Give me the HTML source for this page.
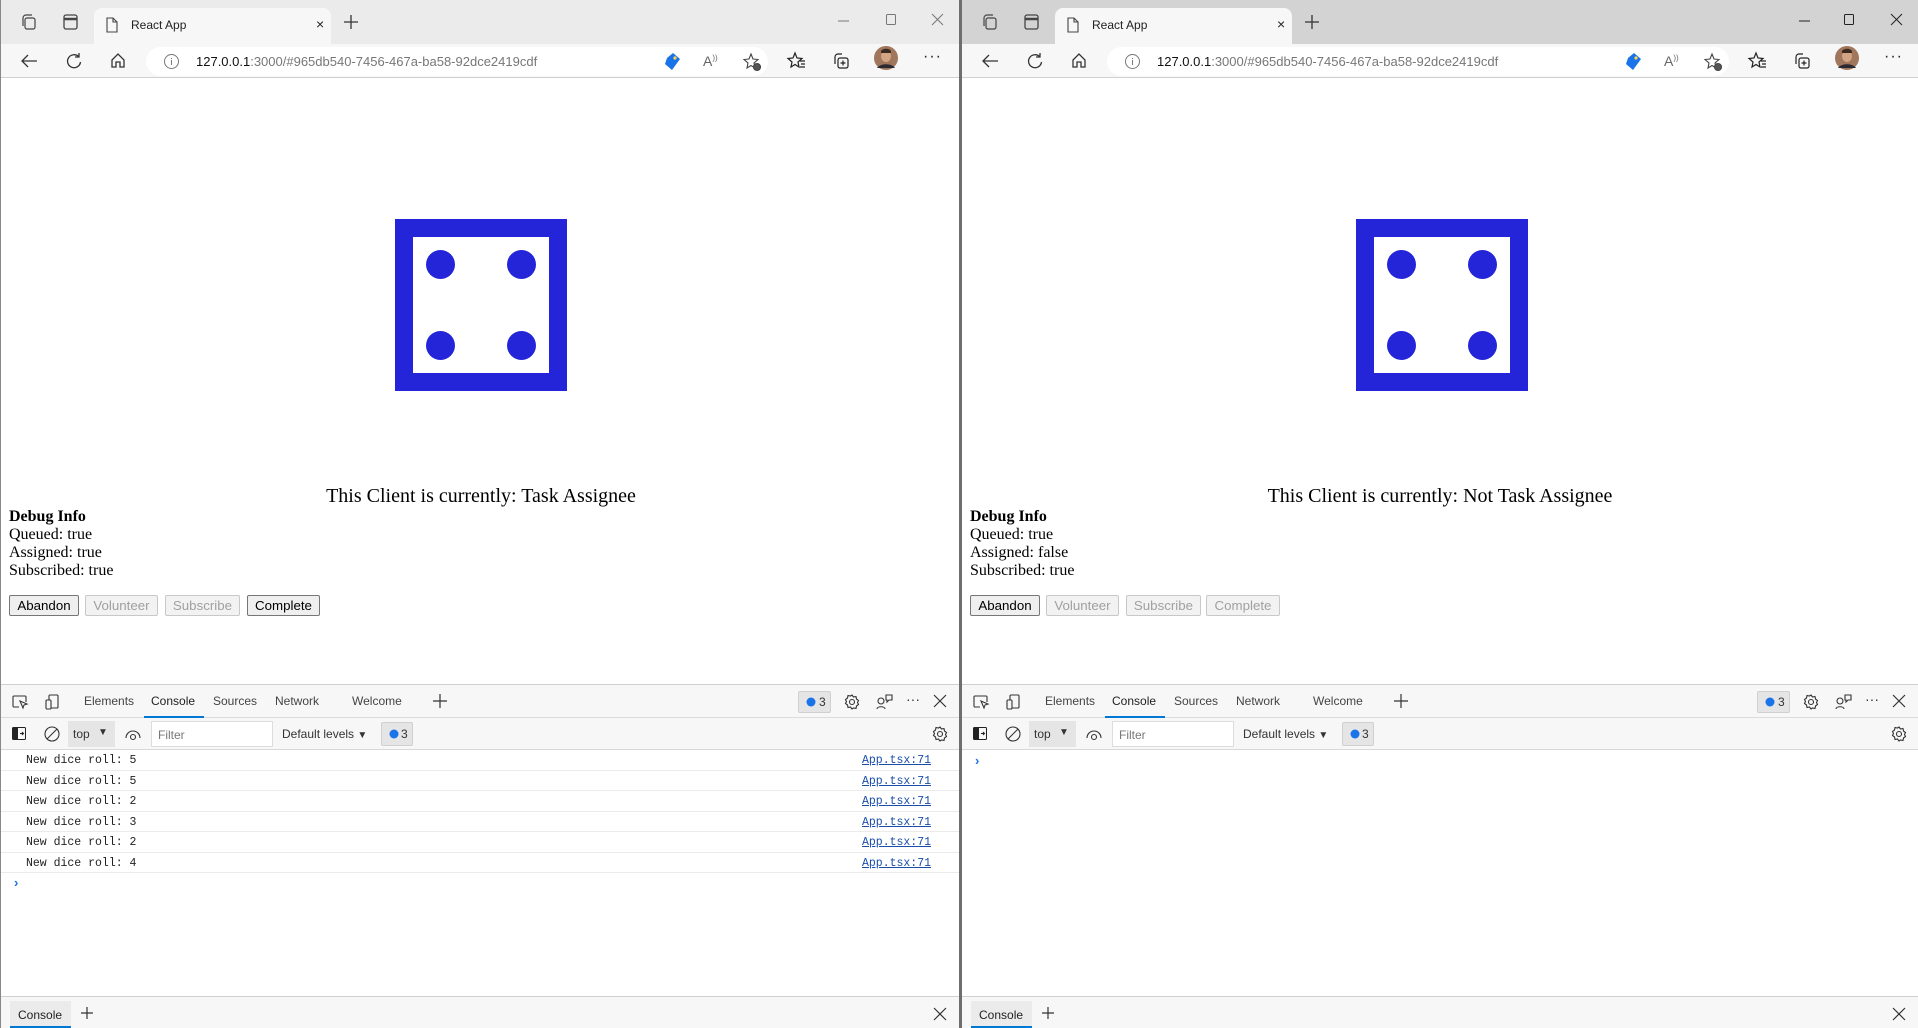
<!DOCTYPE html>
<html><head><meta charset="utf-8"><style>
*{box-sizing:border-box;margin:0;padding:0}
body{width:1918px;height:1028px;position:relative;overflow:hidden;background:#fff;font-family:"Liberation Sans",sans-serif}
.win{position:absolute;top:0;height:1028px;overflow:hidden;background:#fff}
.tabbar{position:absolute;left:0;top:0;right:0;height:44px;background:#ebebeb}
.tab{position:absolute;left:93px;top:8px;width:237px;height:36px;background:#f7f7f7;border-radius:8px 8px 0 0;font-size:12px;color:#222}
.addr{position:absolute;left:0;right:0;top:44px;height:34px;background:#f7f7f7;border-bottom:1px solid #d0d0d0}
.pill{position:absolute;left:145px;top:3px;width:622px;height:29px;background:#fff;border-radius:15px}
svg{position:absolute;overflow:visible}
.dice{position:absolute;left:394px;top:219px;width:172px;height:172px;border:18px solid #2424d8}
.dot{position:absolute;width:29px;height:29px;border-radius:50%;background:#2424d8}
.title{position:absolute;left:0;width:960px;top:485px;text-align:center;font:20px "Liberation Serif",serif;color:#000}
.dbg{position:absolute;left:8px;top:508px;font:16px/18px "Liberation Serif",serif;color:#000}
.btn{position:absolute;top:595px;height:21px;font:13.3px "Liberation Sans",sans-serif;border:1px solid #767676;border-radius:2px;background:#efefef;color:#000;text-align:center;line-height:19px}
.btn.d{color:#a0a0a0;border-color:#c8c8c8;background:#f2f2f2}
.dev{position:absolute;left:0;right:0;top:684px;bottom:0;border-top:1px solid #cfcfcf}
.dtabs{position:absolute;left:0;right:0;top:0;height:33px;background:#f7f7f7;border-bottom:1px solid #dcdcdc;font-size:12px;color:#444}
.dtabs span{position:absolute;top:9px}
.tb{position:absolute;left:0;right:0;top:33px;height:32px;background:#f7f7f7;border-bottom:1px solid #d8d8d8;font-size:12px;color:#333}
.row{position:absolute;left:0;right:0;height:20.5px;border-bottom:1px solid #ebebeb;font:11.5px "Liberation Mono",monospace;color:#222}
.row .t{position:absolute;left:25px;top:4px}
.row .l{position:absolute;right:29px;top:4px;color:#1a4ea8;text-decoration:underline}
.drawer{position:absolute;left:0;right:0;top:311px;bottom:0;background:#f7f7f7;border-top:1px solid #cfcfcf}
.badge{position:absolute;height:22px;background:#e5e5e5;border:1px solid #d0d0d0;border-radius:2px;font-size:12px;color:#333}
</style></head><body>

<!-- LEFT WINDOW -->
<div class="win" style="left:0;width:960px;border-left:1px solid #888">
 <div class="tabbar"></div>
 <svg style="left:20px;top:14px" width="16" height="16" fill="none" stroke="#444" stroke-width="1.2"><rect x="4" y="4" width="10" height="11" rx="2"/><path d="M2 12V4a3 3 0 0 1 3-3h6"/></svg>
 <svg style="left:62px;top:14px" width="16" height="16" fill="none" stroke="#444" stroke-width="1.3"><rect x="1" y="1" width="13" height="14" rx="2"/><path d="M1 5h13" stroke-width="2.5"/></svg>
 <div class="tab"><svg style="left:12px;top:9px" width="12" height="16" fill="none" stroke="#444" stroke-width="1.1"><path d="M1 1h6l4 4v10H1z M7 1v4h4"/></svg><span style="position:absolute;left:37px;top:10px">React App</span><span style="position:absolute;left:222px;top:8px;font-size:14px">×</span></div>
 <svg style="left:343px;top:15px" width="14" height="14" stroke="#333" stroke-width="1.3"><path d="M7 0v14M0 7h14"/></svg>
 <svg style="left:837px;top:20px" width="11" height="2" stroke="#777"><path d="M0 1h11"/></svg>
 <svg style="left:885px;top:14px" width="10" height="11" fill="none" stroke="#777"><rect x=".5" y=".5" width="9" height="10" rx="1"/></svg>
 <svg style="left:931px;top:14px" width="11" height="11" stroke="#777"><path d="M0 0l11 11M11 0L0 11"/></svg>
 <div class="addr">
  <svg style="left:20px;top:10px" width="16" height="14" fill="none" stroke="#333" stroke-width="1.3"><path d="M16 7H1M7 1L1 7l6 6"/></svg>
  <svg style="left:65px;top:9px" width="16" height="16" fill="none" stroke="#333" stroke-width="1.3"><path d="M13 4A6.5 6.5 0 1 0 14.5 9M13 0v4H9"/></svg>
  <svg style="left:110px;top:9px" width="14" height="15" fill="none" stroke="#333" stroke-width="1.3"><path d="M1 7L7 1l6 6v7H9V9H5v5H1z"/></svg>
  <div class="pill">
   <svg style="left:18px;top:7px" width="15" height="15" fill="none" stroke="#777"><circle cx="7.5" cy="7.5" r="7"/><path d="M7.5 6v5M7.5 4v1"/></svg>
   <span style="position:absolute;left:50px;top:7px;font-size:13px;color:#111">127.0.0.1<span style="color:#777">:3000/#965db540-7456-467a-ba58-92dce2419cdf</span></span>
   <svg style="left:518px;top:6px" width="16" height="18"><path d="M3 5l6-5 7 6-8 11-7-6z" fill="#1a73e8"/><circle cx="11" cy="5" r="1.6" fill="#ffd54a"/></svg>
   <span style="position:absolute;left:557px;top:6px;font-size:14px;color:#666">A<sup style="font-size:8px">))</sup></span>
   <svg style="left:597px;top:6px" width="18" height="18" fill="none" stroke="#444" stroke-width="1.1"><path d="M8 1l2 5 5 .5-4 3.5 1 5-4-2.5-4 2.5 1-5-4-3.5 5-.5z"/><circle cx="14" cy="14" r="3.5" fill="#555"/></svg>
  </div>
  <svg style="left:787px;top:8px" width="18" height="18" fill="none" stroke="#222" stroke-width="1.2"><path d="M7 1l2 5 5 .5-4 3.5 1 5-4-2.5-4 2.5 1-5-4-3.5 5-.5z"/><path d="M12 9h5M13 12h4M12 15h5"/></svg>
  <svg style="left:831px;top:8px" width="18" height="18" fill="none" stroke="#222" stroke-width="1.2"><path d="M3 12V5a3 3 0 0 1 3-3h4"/><rect x="6" y="6" width="10" height="10" rx="2"/><path d="M11 8.5v5M8.5 11h5"/></svg>
  <svg style="left:873px;top:2px" width="24" height="24"><circle cx="12" cy="12" r="12" fill="#a0765c"/><ellipse cx="12" cy="10" rx="5" ry="6" fill="#d4a584"/><path d="M3 22c3-5 15-5 18 0" fill="#2a2a35"/><path d="M7 5c2-3 8-3 10 0v2H7z" fill="#3a2a20"/></svg>
  <span style="position:absolute;left:922px;top:4px;font-size:16px;color:#222;letter-spacing:1px">···</span>
 </div>
 <div class="dice"><div class="dot" style="left:13px;top:13px"></div><div class="dot" style="left:94px;top:13px"></div><div class="dot" style="left:13px;top:94px"></div><div class="dot" style="left:94px;top:94px"></div></div>
 <div class="title">This Client is currently: Task Assignee</div>
 <div class="dbg"><b>Debug Info</b><br>Queued: true<br>Assigned: true<br>Subscribed: true</div>
 <div class="btn" style="left:8px;width:70px">Abandon</div>
 <div class="btn d" style="left:84px;width:73px">Volunteer</div>
 <div class="btn d" style="left:164px;width:75px">Subscribe</div>
 <div class="btn" style="left:246px;width:73px">Complete</div>
 <div class="dev">
  <div class="dtabs">
   <svg style="left:11px;top:10px" width="16" height="15" fill="none" stroke="#333" stroke-width="1.1"><path d="M7 12H2a1 1 0 0 1-1-1V2a1 1 0 0 1 1-1h11a1 1 0 0 1 1 1v5"/><path d="M8 6l7 3-3 1-1 3z"/></svg>
   <svg style="left:44px;top:9px" width="14" height="16" fill="none" stroke="#333" stroke-width="1.1"><rect x="4" y="1" width="9" height="13" rx="1"/><rect x="1" y="6" width="5" height="9" rx="1" fill="#f7f7f7"/></svg>
   <span style="left:83px">Elements</span><span style="left:150px;color:#222">Console</span><span style="left:212px">Sources</span><span style="left:274px">Network</span><span style="left:351px">Welcome</span>
   <div style="position:absolute;left:143px;top:31px;width:60px;height:2px;background:#0078d4"></div>
   <svg style="left:432px;top:9px" width="14" height="14" stroke="#333" stroke-width="1.2"><path d="M7 0v14M0 7h14"/></svg>
   <div class="badge" style="left:797px;top:6px;width:33px"><svg style="left:7px;top:5px" width="10" height="10"><circle cx="5" cy="5" r="4.5" fill="#1a73e8"/></svg><span style="position:absolute;left:20px;top:3px">3</span></div>
   <svg style="left:843px;top:9px" width="16" height="16" fill="none" stroke="#333" stroke-width="1.1"><circle cx="8" cy="8" r="2.5"/><path d="M8 1l1.5 2 2.5-.5.5 2.5 2 1.5-1 2 1 2-2 1.5-.5 2.5-2.5-.5L8 15l-1.5-2-2.5.5-.5-2.5-2-1.5 1-2-1-2 2-1.5.5-2.5 2.5.5z"/></svg>
   <svg style="left:875px;top:9px" width="17" height="16" fill="none" stroke="#333" stroke-width="1.1"><circle cx="5" cy="7" r="3"/><path d="M1 15c0-3 8-3 8 0M10 1h6v5h-3l-2 2V6h-1z"/></svg>
   <span style="left:905px;top:6px;font-size:14px;color:#333">···</span>
   <svg style="left:933px;top:10px" width="12" height="12" stroke="#333" stroke-width="1.2"><path d="M0 0l12 12M12 0L0 12"/></svg>
  </div>
  <div class="tb">
   <svg style="left:11px;top:9px" width="14" height="13"><rect x=".5" y=".5" width="13" height="12" rx="1" fill="none" stroke="#222"/><rect x="1" y="1" width="5" height="11" fill="#222"/><path d="M8 6.5h3M10 5l1.5 1.5L10 8" stroke="#222" fill="none"/></svg>
   <svg style="left:43px;top:8px" width="16" height="16" fill="none" stroke="#333" stroke-width="1.1"><circle cx="8" cy="8" r="7"/><path d="M3 13L13 3"/></svg>
   <div style="position:absolute;left:67px;top:3px;width:47px;height:26px;background:#e5e5e5"><span style="position:absolute;left:5px;top:6px">top</span><span style="position:absolute;left:30px;top:6px;font-size:10px">▼</span></div>
   <svg style="left:124px;top:10px" width="16" height="12" fill="none" stroke="#333" stroke-width="1.1"><path d="M1 10a7 7 0 0 1 14 0"/><circle cx="8" cy="9" r="2.5"/></svg>
   <div style="position:absolute;left:150px;top:3px;width:122px;height:26px;background:#fff;border:1px solid #ddd"><span style="position:absolute;left:6px;top:6px;color:#777">Filter</span></div>
   <span style="position:absolute;left:281px;top:9px">Default levels <span style="font-size:10px">▼</span></span>
   <div class="badge" style="left:380px;top:4px;width:32px;height:24px"><svg style="left:7px;top:6px" width="10" height="10"><circle cx="5" cy="5" r="4.5" fill="#1a73e8"/></svg><span style="position:absolute;left:19px;top:4px">3</span></div>
   <svg style="left:931px;top:8px" width="16" height="16" fill="none" stroke="#333" stroke-width="1.1"><circle cx="8" cy="8" r="2.5"/><path d="M8 1l1.5 2 2.5-.5.5 2.5 2 1.5-1 2 1 2-2 1.5-.5 2.5-2.5-.5L8 15l-1.5-2-2.5.5-.5-2.5-2-1.5 1-2-1-2 2-1.5.5-2.5 2.5.5z"/></svg>
  </div>
  <div class="row" style="top:65px"><span class="t">New dice roll: 5</span><span class="l">App.tsx:71</span></div>
  <div class="row" style="top:85.5px"><span class="t">New dice roll: 5</span><span class="l">App.tsx:71</span></div>
  <div class="row" style="top:106px"><span class="t">New dice roll: 2</span><span class="l">App.tsx:71</span></div>
  <div class="row" style="top:126.5px"><span class="t">New dice roll: 3</span><span class="l">App.tsx:71</span></div>
  <div class="row" style="top:147px"><span class="t">New dice roll: 2</span><span class="l">App.tsx:71</span></div>
  <div class="row" style="top:167.5px"><span class="t">New dice roll: 4</span><span class="l">App.tsx:71</span></div>
  <span style="position:absolute;left:13px;top:190px;color:#1a73e8;font-size:13px;font-weight:bold">›</span>
  <div class="drawer">
   <div style="position:absolute;left:9px;top:4px;width:61px;height:27px;background:#ebebeb;border-bottom:2px solid #0078d4"><span style="position:absolute;left:8px;top:7px;font-size:12px;color:#222">Console</span></div>
   <svg style="left:80px;top:10px" width="12" height="12" stroke="#333" stroke-width="1.2"><path d="M6 0v12M0 6h12"/></svg>
   <svg style="left:933px;top:11px" width="12" height="12" stroke="#333" stroke-width="1.2"><path d="M0 0l12 12M12 0L0 12"/></svg>
  </div>
 </div>
</div>

<div style="position:absolute;left:959px;top:0;width:3px;height:1028px;background:#6e6e6e"></div>

<!-- RIGHT WINDOW -->
<div class="win" style="left:962px;width:956px">
 <div class="tabbar" style="background:#d3d3d3"></div>
 <svg style="left:20px;top:14px" width="16" height="16" fill="none" stroke="#444" stroke-width="1.2"><rect x="4" y="4" width="10" height="11" rx="2"/><path d="M2 12V4a3 3 0 0 1 3-3h6"/></svg>
 <svg style="left:62px;top:14px" width="16" height="16" fill="none" stroke="#444" stroke-width="1.3"><rect x="1" y="1" width="13" height="14" rx="2"/><path d="M1 5h13" stroke-width="2.5"/></svg>
 <div class="tab"><svg style="left:12px;top:9px" width="12" height="16" fill="none" stroke="#444" stroke-width="1.1"><path d="M1 1h6l4 4v10H1z M7 1v4h4"/></svg><span style="position:absolute;left:37px;top:10px">React App</span><span style="position:absolute;left:222px;top:8px;font-size:14px">×</span></div>
 <svg style="left:343px;top:15px" width="14" height="14" stroke="#333" stroke-width="1.3"><path d="M7 0v14M0 7h14"/></svg>
 <svg style="left:837px;top:20px" width="11" height="2" stroke="#222"><path d="M0 1h11"/></svg>
 <svg style="left:882px;top:14px" width="10" height="11" fill="none" stroke="#222"><rect x=".5" y=".5" width="9" height="10" rx="1"/></svg>
 <svg style="left:929px;top:14px" width="11" height="11" stroke="#222"><path d="M0 0l11 11M11 0L0 11"/></svg>
 <div class="addr">
  <svg style="left:20px;top:10px" width="16" height="14" fill="none" stroke="#333" stroke-width="1.3"><path d="M16 7H1M7 1L1 7l6 6"/></svg>
  <svg style="left:65px;top:9px" width="16" height="16" fill="none" stroke="#333" stroke-width="1.3"><path d="M13 4A6.5 6.5 0 1 0 14.5 9M13 0v4H9"/></svg>
  <svg style="left:110px;top:9px" width="14" height="15" fill="none" stroke="#333" stroke-width="1.3"><path d="M1 7L7 1l6 6v7H9V9H5v5H1z"/></svg>
  <div class="pill">
   <svg style="left:18px;top:7px" width="15" height="15" fill="none" stroke="#777"><circle cx="7.5" cy="7.5" r="7"/><path d="M7.5 6v5M7.5 4v1"/></svg>
   <span style="position:absolute;left:50px;top:7px;font-size:13px;color:#111">127.0.0.1<span style="color:#777">:3000/#965db540-7456-467a-ba58-92dce2419cdf</span></span>
   <svg style="left:518px;top:6px" width="16" height="18"><path d="M3 5l6-5 7 6-8 11-7-6z" fill="#1a73e8"/><circle cx="11" cy="5" r="1.6" fill="#ffd54a"/></svg>
   <span style="position:absolute;left:557px;top:6px;font-size:14px;color:#666">A<sup style="font-size:8px">))</sup></span>
   <svg style="left:597px;top:6px" width="18" height="18" fill="none" stroke="#444" stroke-width="1.1"><path d="M8 1l2 5 5 .5-4 3.5 1 5-4-2.5-4 2.5 1-5-4-3.5 5-.5z"/><circle cx="14" cy="14" r="3.5" fill="#555"/></svg>
  </div>
  <svg style="left:787px;top:8px" width="18" height="18" fill="none" stroke="#222" stroke-width="1.2"><path d="M7 1l2 5 5 .5-4 3.5 1 5-4-2.5-4 2.5 1-5-4-3.5 5-.5z"/><path d="M12 9h5M13 12h4M12 15h5"/></svg>
  <svg style="left:831px;top:8px" width="18" height="18" fill="none" stroke="#222" stroke-width="1.2"><path d="M3 12V5a3 3 0 0 1 3-3h4"/><rect x="6" y="6" width="10" height="10" rx="2"/><path d="M11 8.5v5M8.5 11h5"/></svg>
  <svg style="left:873px;top:2px" width="24" height="24"><circle cx="12" cy="12" r="12" fill="#a0765c"/><ellipse cx="12" cy="10" rx="5" ry="6" fill="#d4a584"/><path d="M3 22c3-5 15-5 18 0" fill="#2a2a35"/><path d="M7 5c2-3 8-3 10 0v2H7z" fill="#3a2a20"/></svg>
  <span style="position:absolute;left:922px;top:4px;font-size:16px;color:#222;letter-spacing:1px">···</span>
 </div>
 <div class="dice"><div class="dot" style="left:13px;top:13px"></div><div class="dot" style="left:94px;top:13px"></div><div class="dot" style="left:13px;top:94px"></div><div class="dot" style="left:94px;top:94px"></div></div>
 <div class="title" style="width:956px">This Client is currently: Not Task Assignee</div>
 <div class="dbg"><b>Debug Info</b><br>Queued: true<br>Assigned: false<br>Subscribed: true</div>
 <div class="btn" style="left:8px;width:70px">Abandon</div>
 <div class="btn d" style="left:84px;width:73px">Volunteer</div>
 <div class="btn d" style="left:164px;width:75px">Subscribe</div>
 <div class="btn d" style="left:244px;width:74px">Complete</div>
 <div class="dev">
  <div class="dtabs">
   <svg style="left:11px;top:10px" width="16" height="15" fill="none" stroke="#333" stroke-width="1.1"><path d="M7 12H2a1 1 0 0 1-1-1V2a1 1 0 0 1 1-1h11a1 1 0 0 1 1 1v5"/><path d="M8 6l7 3-3 1-1 3z"/></svg>
   <svg style="left:44px;top:9px" width="14" height="16" fill="none" stroke="#333" stroke-width="1.1"><rect x="4" y="1" width="9" height="13" rx="1"/><rect x="1" y="6" width="5" height="9" rx="1" fill="#f7f7f7"/></svg>
   <span style="left:83px">Elements</span><span style="left:150px;color:#222">Console</span><span style="left:212px">Sources</span><span style="left:274px">Network</span><span style="left:351px">Welcome</span>
   <div style="position:absolute;left:143px;top:31px;width:60px;height:2px;background:#0078d4"></div>
   <svg style="left:432px;top:9px" width="14" height="14" stroke="#333" stroke-width="1.2"><path d="M7 0v14M0 7h14"/></svg>
   <div class="badge" style="left:795px;top:6px;width:33px"><svg style="left:7px;top:5px" width="10" height="10"><circle cx="5" cy="5" r="4.5" fill="#1a73e8"/></svg><span style="position:absolute;left:20px;top:3px">3</span></div>
   <svg style="left:841px;top:9px" width="16" height="16" fill="none" stroke="#333" stroke-width="1.1"><circle cx="8" cy="8" r="2.5"/><path d="M8 1l1.5 2 2.5-.5.5 2.5 2 1.5-1 2 1 2-2 1.5-.5 2.5-2.5-.5L8 15l-1.5-2-2.5.5-.5-2.5-2-1.5 1-2-1-2 2-1.5.5-2.5 2.5.5z"/></svg>
   <svg style="left:873px;top:9px" width="17" height="16" fill="none" stroke="#333" stroke-width="1.1"><circle cx="5" cy="7" r="3"/><path d="M1 15c0-3 8-3 8 0M10 1h6v5h-3l-2 2V6h-1z"/></svg>
   <span style="left:903px;top:6px;font-size:14px;color:#333">···</span>
   <svg style="left:931px;top:10px" width="12" height="12" stroke="#333" stroke-width="1.2"><path d="M0 0l12 12M12 0L0 12"/></svg>
  </div>
  <div class="tb">
   <svg style="left:11px;top:9px" width="14" height="13"><rect x=".5" y=".5" width="13" height="12" rx="1" fill="none" stroke="#222"/><rect x="1" y="1" width="5" height="11" fill="#222"/><path d="M8 6.5h3M10 5l1.5 1.5L10 8" stroke="#222" fill="none"/></svg>
   <svg style="left:43px;top:8px" width="16" height="16" fill="none" stroke="#333" stroke-width="1.1"><circle cx="8" cy="8" r="7"/><path d="M3 13L13 3"/></svg>
   <div style="position:absolute;left:67px;top:3px;width:47px;height:26px;background:#e5e5e5"><span style="position:absolute;left:5px;top:6px">top</span><span style="position:absolute;left:30px;top:6px;font-size:10px">▼</span></div>
   <svg style="left:124px;top:10px" width="16" height="12" fill="none" stroke="#333" stroke-width="1.1"><path d="M1 10a7 7 0 0 1 14 0"/><circle cx="8" cy="9" r="2.5"/></svg>
   <div style="position:absolute;left:150px;top:3px;width:122px;height:26px;background:#fff;border:1px solid #ddd"><span style="position:absolute;left:6px;top:6px;color:#777">Filter</span></div>
   <span style="position:absolute;left:281px;top:9px">Default levels <span style="font-size:10px">▼</span></span>
   <div class="badge" style="left:380px;top:4px;width:32px;height:24px"><svg style="left:7px;top:6px" width="10" height="10"><circle cx="5" cy="5" r="4.5" fill="#1a73e8"/></svg><span style="position:absolute;left:19px;top:4px">3</span></div>
   <svg style="left:929px;top:8px" width="16" height="16" fill="none" stroke="#333" stroke-width="1.1"><circle cx="8" cy="8" r="2.5"/><path d="M8 1l1.5 2 2.5-.5.5 2.5 2 1.5-1 2 1 2-2 1.5-.5 2.5-2.5-.5L8 15l-1.5-2-2.5.5-.5-2.5-2-1.5 1-2-1-2 2-1.5.5-2.5 2.5.5z"/></svg>
  </div>
  <span style="position:absolute;left:13px;top:68px;color:#1a73e8;font-size:13px;font-weight:bold">›</span>
  <div class="drawer">
   <div style="position:absolute;left:9px;top:4px;width:61px;height:27px;background:#ebebeb;border-bottom:2px solid #0078d4"><span style="position:absolute;left:8px;top:7px;font-size:12px;color:#222">Console</span></div>
   <svg style="left:80px;top:10px" width="12" height="12" stroke="#333" stroke-width="1.2"><path d="M6 0v12M0 6h12"/></svg>
   <svg style="left:931px;top:11px" width="12" height="12" stroke="#333" stroke-width="1.2"><path d="M0 0l12 12M12 0L0 12"/></svg>
  </div>
 </div>
</div>
</body></html>
